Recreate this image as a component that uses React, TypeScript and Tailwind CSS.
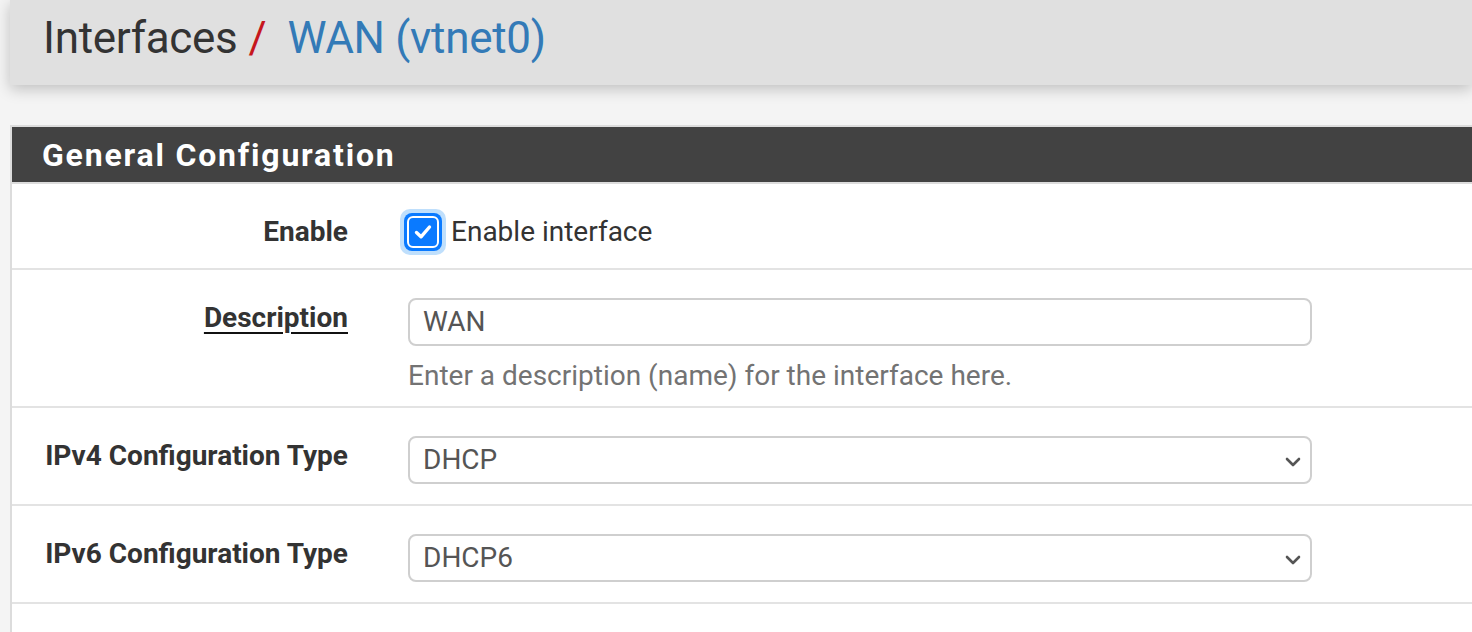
import React from 'react';

const font = { fontFamily: 'Roboto, "Liberation Sans", sans-serif' };

const Chevron = () => (
  <svg width="16" height="10" viewBox="0 0 16 10" className="absolute right-[9px] top-[19px] pointer-events-none">
    <path d="M2 2 L8 8 L14 2" fill="none" stroke="#555" strokeWidth="2.6" strokeLinecap="round" strokeLinejoin="round" />
  </svg>
);

interface RowProps {
  label: string;
  underline?: boolean;
  className: string;
  children: React.ReactNode;
}

const Row: React.FC<RowProps> = ({ label, underline, className, children }) => (
  <div className={`flex border-b-2 border-[#e3e3e3] ${className}`}>
    <div className="w-[336px] shrink-0 text-right text-[28px] leading-[40px] font-bold text-[#333]">
      {underline ? (
        <span className="underline decoration-[2px] underline-offset-[5px] decoration-[#111]">{label}</span>
      ) : (
        label
      )}
    </div>
    <div className="ml-[60px] flex-1">{children}</div>
  </div>
);

const SelectBox: React.FC<{ value: string }> = ({ value }) => (
  <div className="relative w-[904px] h-[48px] border-2 border-[#cfcfcf] rounded-[8px] bg-white text-[28px] leading-[44px] text-[#555] pl-[13px]">
    {value}
    <Chevron />
  </div>
);

export default function App() {
  return (
    <div className="w-[1472px] h-[632px] overflow-hidden bg-[#f4f4f4]" style={font}>
      <div className="ml-[10px] h-[85px] bg-[#e0e0e0] shadow-[0_4px_14px_rgba(0,0,0,0.22)] pl-[33px] pt-[13px] relative z-10">
        <h1 className="text-[44px] leading-[50px] font-normal text-[#333] tracking-[-0.3px]">
          Interfaces<span className="text-[#c6171d] ml-[11px]">/</span>
          <span className="text-[#337ab7] ml-[21px]">WAN (vtnet0)</span>
        </h1>
      </div>

      <div className="ml-[10px] mt-[40px] border-2 border-r-0 border-[#dcdcdc] bg-white">
        <div className="h-[57px] bg-[#424242] border-b-2 border-[#dcdcdc] pl-[30px] flex items-center">
          <h2 className="text-[32px] font-bold text-white tracking-[1.8px] leading-none">General Configuration</h2>
        </div>

        <Row label="Enable" className="pt-[28px] pb-[16px]">
          <label className="flex items-center h-[40px] -ml-[8px]">
            <span className="w-[46px] h-[46px] rounded-[10px] bg-[#bfdffc] flex items-center justify-center">
              <span className="w-[38px] h-[38px] rounded-[8px] bg-[#0a7aff] flex items-center justify-center">
                <span className="w-[32px] h-[32px] rounded-[6px] border-2 border-white flex items-center justify-center">
                  <svg width="20" height="18" viewBox="0 0 20 18">
                    <path d="M3.5 9.5 L8 13.8 L16.5 4" fill="none" stroke="white" strokeWidth="3.4" strokeLinecap="round" strokeLinejoin="round" />
                  </svg>
                </span>
              </span>
            </span>
            <span className="ml-[5px] text-[28px] leading-[40px] text-[#333]">Enable interface</span>
          </label>
        </Row>

        <Row label="Description" underline className="pt-[28px] pb-[10px]">
          <div className="w-[904px] h-[48px] border-2 border-[#cfcfcf] rounded-[8px] bg-white text-[28px] leading-[44px] text-[#555] pl-[13px]">
            WAN
          </div>
          <div className="mt-[10px] text-[28px] leading-[40px] text-[#737373]">
            Enter a description (name) for the interface here.
          </div>
        </Row>

        <Row label="IPv4 Configuration Type" className="pt-[28px] pb-[20px]">
          <SelectBox value="DHCP" />
        </Row>

        <Row label="IPv6 Configuration Type" className="pt-[28px] pb-[20px]">
          <SelectBox value="DHCP6" />
        </Row>

        <div className="h-[40px]" />
      </div>
    </div>
  );
}
